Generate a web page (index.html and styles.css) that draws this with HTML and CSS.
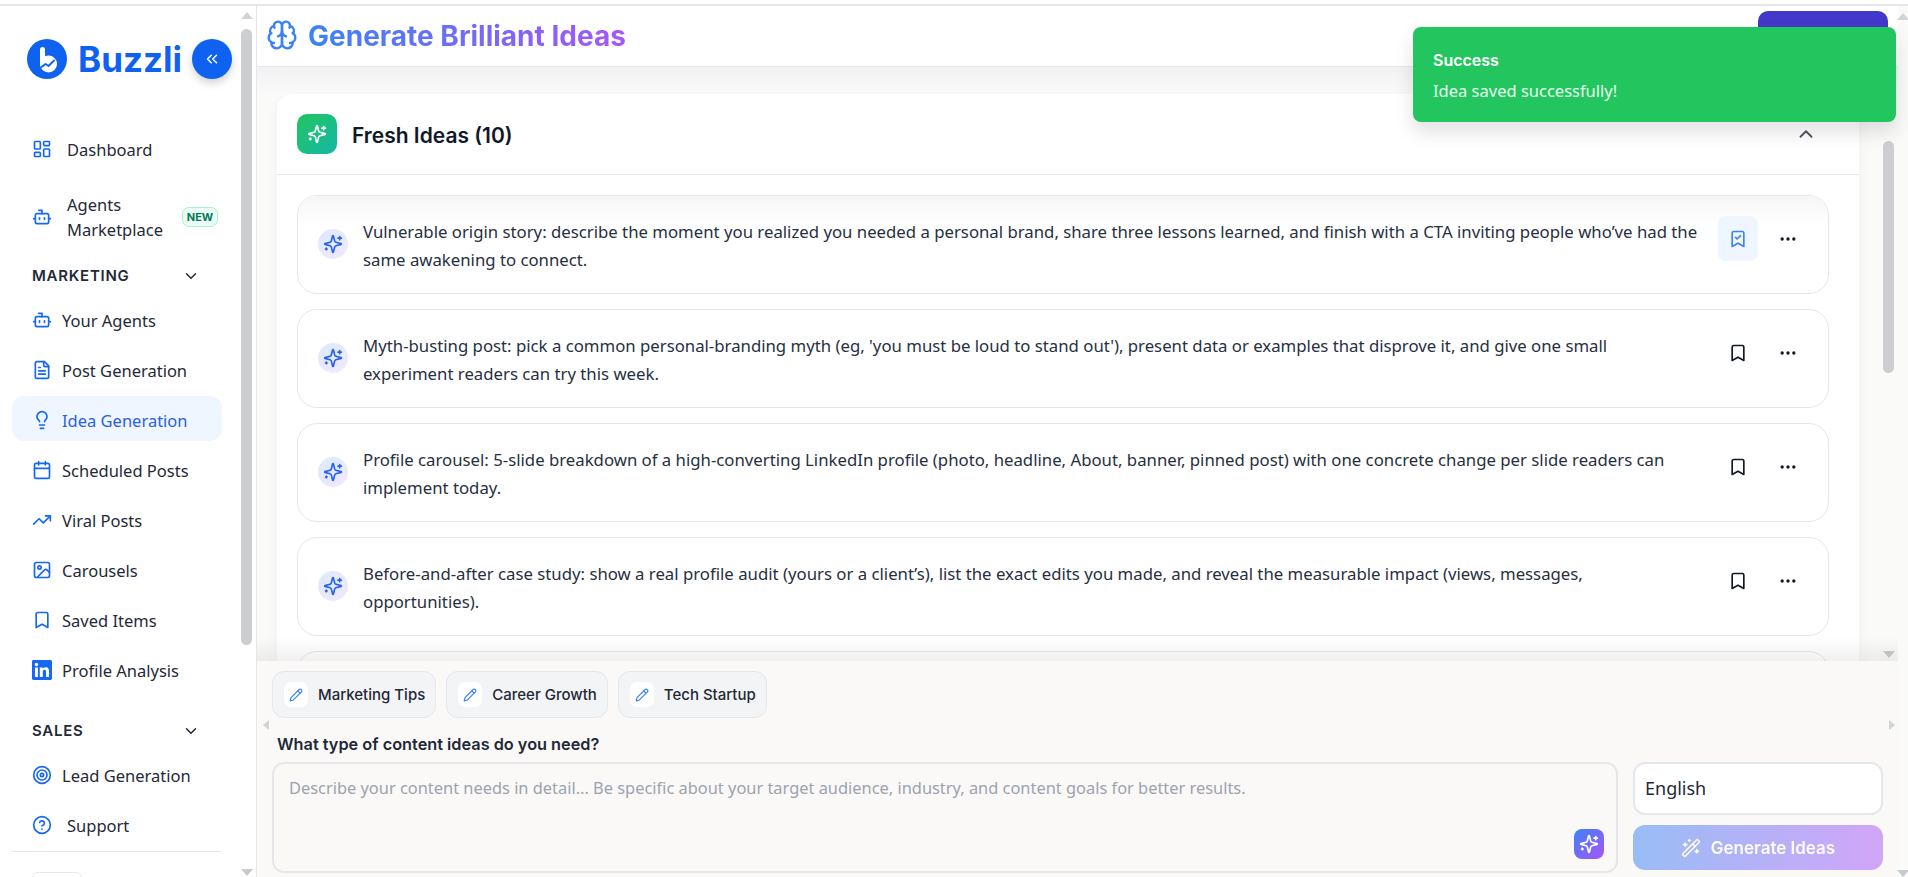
FILE: index.html
```html
<!DOCTYPE html>
<html lang="en">
<head>
<meta charset="utf-8">
<title>Buzzli - Generate Brilliant Ideas</title>
<link rel="stylesheet" href="styles.css">
</head>
<body>
<svg class="defs" aria-hidden="true">
  <symbol id="i-dash" viewBox="0 0 24 24"><rect x="3" y="3" width="7" height="9" rx="1"/><rect x="14" y="3" width="7" height="5" rx="1"/><rect x="14" y="12" width="7" height="9" rx="1"/><rect x="3" y="16" width="7" height="5" rx="1"/></symbol>
  <symbol id="i-bot" viewBox="0 0 24 24"><path d="M12 8V4H8"/><rect x="4" y="8" width="16" height="12" rx="2"/><path d="M2 14h2M20 14h2M15 13v2M9 13v2"/></symbol>
  <symbol id="i-file" viewBox="0 0 24 24"><path d="M15 2H6a2 2 0 0 0-2 2v16a2 2 0 0 0 2 2h12a2 2 0 0 0 2-2V7Z"/><path d="M14 2v4a2 2 0 0 0 2 2h4M10 9H8M16 13H8M16 17H8"/></symbol>
  <symbol id="i-bulb" viewBox="0 0 24 24"><path d="M15 14c.2-1 .7-1.7 1.5-2.5 1-.9 1.5-2.2 1.5-3.5A6 6 0 0 0 6 8c0 1 .2 2.2 1.5 3.5.7.7 1.3 1.5 1.5 2.5"/><path d="M9 18h6M10 22h4"/></symbol>
  <symbol id="i-cal" viewBox="0 0 24 24"><path d="M8 2v4M16 2v4"/><rect x="3" y="4" width="18" height="18" rx="2"/><path d="M3 10h18"/></symbol>
  <symbol id="i-trend" viewBox="0 0 24 24"><path d="M22 7l-8.500 8.500-5-5L2 17"/><path d="M16 7h6v6"/></symbol>
  <symbol id="i-image" viewBox="0 0 24 24"><rect x="3" y="3" width="18" height="18" rx="2"/><circle cx="9" cy="9" r="2"/><path d="m21 15-3.086-3.086a2 2 0 0 0-2.828 0L6 21"/></symbol>
  <symbol id="i-mark" viewBox="0 0 24 24"><path d="m19 21-7-4-7 4V5a2 2 0 0 1 2-2h10a2 2 0 0 1 2 2v16z"/></symbol>
  <symbol id="i-markc" viewBox="0 0 24 24"><path d="m19 21-7-4-7 4V5a2 2 0 0 1 2-2h10a2 2 0 0 1 2 2Z"/><path d="m9 10 2 2 4-4"/></symbol>
  <symbol id="i-target" viewBox="0 0 24 24"><circle cx="12" cy="12" r="10"/><circle cx="12" cy="12" r="6"/><circle cx="12" cy="12" r="2"/></symbol>
  <symbol id="i-help" viewBox="0 0 24 24"><circle cx="12" cy="12" r="10"/><path d="M9.090 9a3 3 0 0 1 5.830 1c0 2-3 3-3 3M12 17h.01"/></symbol>
  <symbol id="i-chevs" viewBox="0 0 24 24"><path d="m11 17-5-5 5-5M18 17l-5-5 5-5"/></symbol>
  <symbol id="i-down" viewBox="0 0 24 24"><path d="m6 9 6 6 6-6"/></symbol>
  <symbol id="i-up" viewBox="0 0 24 24"><path d="m18 15-6-6-6 6"/></symbol>
  <symbol id="i-spark" viewBox="0 0 24 24"><path d="M9.937 15.500A2 2 0 0 0 8.500 14.063l-6.135-1.582a.5.5 0 0 1 0-.962L8.500 9.936A2 2 0 0 0 9.937 8.500l1.582-6.135a.5.5 0 0 1 .963 0L14.063 8.500A2 2 0 0 0 15.500 9.937l6.135 1.581a.5.5 0 0 1 0 .964L15.500 14.063a2 2 0 0 0-1.437 1.437l-1.582 6.135a.5.5 0 0 1-.963 0z"/><path d="M20 3v4M22 5h-4M4 17v2M5 18H3"/></symbol>
  <symbol id="i-brain" viewBox="0 0 24 24"><path d="M12 5a3 3 0 1 0-5.997.125 4 4 0 0 0-2.526 5.770 4 4 0 0 0 .556 6.588A4 4 0 1 0 12 18Z"/><path d="M12 5a3 3 0 1 1 5.997.125 4 4 0 0 1 2.526 5.770 4 4 0 0 1-.556 6.588A4 4 0 1 1 12 18Z"/><path d="M15 13a4.500 4.500 0 0 1-3-4 4.500 4.500 0 0 1-3 4M17.599 6.500a3 3 0 0 0 .399-1.375M6.003 5.125A3 3 0 0 0 6.401 6.500M3.477 10.896a4 4 0 0 1 .585-.396M19.938 10.500a4 4 0 0 1 .585.396M6 18a4 4 0 0 1-1.967-.516M19.967 17.484A4 4 0 0 1 18 18"/></symbol>
  <symbol id="i-pencil" viewBox="0 0 24 24"><path d="M17 3a2.850 2.830 0 1 1 4 4L7.500 20.500 2 22l1.500-5.500Z"/><path d="m15 5 4 4"/></symbol>
  <symbol id="i-wand" viewBox="0 0 24 24"><path d="m21.640 3.640-1.280-1.280a1.210 1.210 0 0 0-1.720 0L2.360 18.640a1.210 1.210 0 0 0 0 1.720l1.280 1.280a1.200 1.200 0 0 0 1.720 0L21.640 5.360a1.200 1.200 0 0 0 0-1.720"/><path d="m14 7 3 3M5 6v4M19 14v4M10 2v2M7 8H3M21 16h-4M11 3H9"/></symbol>
  <symbol id="i-dots" viewBox="0 0 24 24"><circle cx="12" cy="12" r="1"/><circle cx="19" cy="12" r="1"/><circle cx="5" cy="12" r="1"/></symbol>
</svg>

<div class="top-strip"></div>
<div class="app">
  <aside class="sidebar">
    <div class="side-col">
      <div class="brand">
        <svg class="logo" viewBox="0 0 40 40"><circle cx="20" cy="20" r="20" class="logo-bg"/><path class="logo-stem" d="M15.500 10.500V25"/><circle class="logo-bowl" cx="21.500" cy="25" r="8.500"/><path class="logo-tick" d="M14.500 28l4-3 3 2 5.500-5.500"/></svg>
        <span class="brand-name">Buzzli</span>
        <button class="collapse"><svg class="ic-collapse"><use href="#i-chevs"/></svg></button>
      </div>
      <nav class="nav">
        <a class="item wide"><svg class="ic"><use href="#i-dash"/></svg><span>Dashboard</span></a>
        <a class="item wide tall"><svg class="ic"><use href="#i-bot"/></svg><span class="two-line">Agents Marketplace</span><em class="new">NEW</em></a>
        <div class="section first"><span>MARKETING</span><svg class="chev"><use href="#i-down"/></svg></div>
        <a class="item"><svg class="ic"><use href="#i-bot"/></svg><span>Your Agents</span></a>
        <a class="item"><svg class="ic"><use href="#i-file"/></svg><span>Post Generation</span></a>
        <a class="item active"><svg class="ic"><use href="#i-bulb"/></svg><span>Idea Generation</span></a>
        <a class="item"><svg class="ic"><use href="#i-cal"/></svg><span>Scheduled Posts</span></a>
        <a class="item"><svg class="ic"><use href="#i-trend"/></svg><span>Viral Posts</span></a>
        <a class="item"><svg class="ic"><use href="#i-image"/></svg><span>Carousels</span></a>
        <a class="item"><svg class="ic"><use href="#i-mark"/></svg><span>Saved Items</span></a>
        <a class="item"><svg class="ic solid" viewBox="0 0 24 24"><path d="M20.447 20.452h-3.554v-5.569c0-1.328-.027-3.037-1.852-3.037-1.853 0-2.136 1.445-2.136 2.939v5.667H9.351V9h3.414v1.561h.046c.477-.9 1.637-1.85 3.37-1.85 3.601 0 4.267 2.37 4.267 5.455v6.286zM5.337 7.433c-1.144 0-2.063-.926-2.063-2.065 0-1.138.92-2.063 2.063-2.063 1.14 0 2.064.925 2.064 2.063 0 1.139-.925 2.065-2.064 2.065zm1.782 13.019H3.555V9h3.564v11.452zM22.225 0H1.771C.792 0 0 .774 0 1.729v20.542C0 23.227.792 24 1.771 24h20.451C23.2 24 24 23.227 24 22.271V1.729C24 .774 23.2 0 22.222 0h.003z"/></svg><span>Profile Analysis</span></a>
        <div class="section"><span>SALES</span><svg class="chev"><use href="#i-down"/></svg></div>
        <a class="item"><svg class="ic"><use href="#i-target"/></svg><span>Lead Generation</span></a>
        <a class="item"><svg class="ic"><use href="#i-help"/></svg><span class="wide-text">Support</span></a>
      </nav>
      <div class="side-foot"><div class="foot-box"></div></div>
    </div>
    <div class="vbar side-bar">
      <i class="arrow up"></i>
      <b class="thumb side-thumb"></b>
      <i class="arrow down"></i>
    </div>
  </aside>

  <main class="main">
    <header class="head">
      <svg class="ic-brain"><use href="#i-brain"/></svg>
      <h1>Generate Brilliant Ideas</h1>
      <div class="head-btn"></div>
    </header>
    <div class="body-area">
      <section class="scroller">
        <div class="card">
          <div class="card-head">
            <span class="badge"><svg class="ic-white"><use href="#i-spark"/></svg></span>
            <h2>Fresh Ideas (10)</h2>
            <svg class="ic-collapse-up"><use href="#i-up"/></svg>
          </div>
          <div class="ideas">
            <article class="idea">
              <span class="idea-ic"><svg><use href="#i-spark"/></svg></span>
              <p>Vulnerable origin story: describe the moment you realized you needed a personal brand, share three lessons learned, and finish with a CTA inviting people who’ve had the same awakening to connect.</p>
              <button class="act saved"><svg><use href="#i-markc"/></svg></button>
              <button class="act"><svg><use href="#i-dots"/></svg></button>
            </article>
            <article class="idea">
              <span class="idea-ic"><svg><use href="#i-spark"/></svg></span>
              <p>Myth-busting post: pick a common personal-branding myth (eg, 'you must be loud to stand out'), present data or examples that disprove it, and give one small experiment readers can try this week.</p>
              <button class="act"><svg><use href="#i-mark"/></svg></button>
              <button class="act"><svg><use href="#i-dots"/></svg></button>
            </article>
            <article class="idea">
              <span class="idea-ic"><svg><use href="#i-spark"/></svg></span>
              <p>Profile carousel: 5-slide breakdown of a high-converting LinkedIn profile (photo, headline, About, banner, pinned post) with one concrete change per slide readers can implement today.</p>
              <button class="act"><svg><use href="#i-mark"/></svg></button>
              <button class="act"><svg><use href="#i-dots"/></svg></button>
            </article>
            <article class="idea">
              <span class="idea-ic"><svg><use href="#i-spark"/></svg></span>
              <p>Before-and-after case study: show a real profile audit (yours or a client’s), list the exact edits you made, and reveal the measurable impact (views, messages, opportunities).</p>
              <button class="act"><svg><use href="#i-mark"/></svg></button>
              <button class="act"><svg><use href="#i-dots"/></svg></button>
            </article>
            <article class="idea"></article>
          </div>
        </div>
        <div class="vbar content-bar">
          <b class="thumb content-thumb"></b>
          <i class="arrow down"></i>
        </div>
      </section>
      <section class="panel">
        <div class="chips">
          <button class="chip"><span class="chip-ic"><svg><use href="#i-pencil"/></svg></span>Marketing Tips</button>
          <button class="chip"><span class="chip-ic"><svg><use href="#i-pencil"/></svg></span>Career Growth</button>
          <button class="chip"><span class="chip-ic"><svg><use href="#i-pencil"/></svg></span>Tech Startup</button>
        </div>
        <i class="arrow left h-left"></i>
        <i class="arrow right h-right"></i>
        <label class="prompt-label">What type of content ideas do you need?</label>
        <div class="form-row">
          <div class="prompt">
            <span class="placeholder">Describe your content needs in detail... Be specific about your target audience, industry, and content goals for better results.</span>
            <span class="ai-btn"><svg><use href="#i-spark"/></svg></span>
          </div>
          <div class="controls">
            <div class="lang">English</div>
            <button class="generate"><svg><use href="#i-wand"/></svg>Generate Ideas</button>
          </div>
        </div>
      </section>
    </div>
  </main>

  <div class="vbar outer-bar">
    <i class="arrow up"></i>
    <i class="arrow down"></i>
  </div>
</div>

<div class="toast">
  <strong>Success</strong>
  <span>Idea saved successfully!</span>
</div>
</body>
</html>
```
FILE: styles.css
```css
* { box-sizing: border-box; }
html, body { margin: 0; height: 877px; overflow: hidden; }
body {
  background: #fff;
  color: #111827;
  font-family: "Noto Sans", "Liberation Sans", sans-serif;
  font-size: 16px;
  position: relative;
}
.defs { position: absolute; width: 0; height: 0; }
svg { fill: none; stroke: currentColor; stroke-width: 2; stroke-linecap: round; stroke-linejoin: round; display: block; }
button { font: inherit; border: 0; padding: 0; background: none; }

.top-strip { height: 6px; border-bottom: 2px solid #e5e7eb; }
.app { display: flex; height: 871px; }

/* sidebar */
.sidebar { width: 257px; flex: none; display: flex; border-right: 1px solid #e5e7eb; height: 100%; overflow: hidden; }
.side-col { width: 241px; flex: none; padding: 33px 0 0 12px; }
.brand { display: flex; align-items: center; height: 40px; margin-left: 15px; }
.logo { width: 40px; height: 40px; flex: none; stroke: none; }
.logo-bg { fill: #0f62f0; stroke: none; }
.logo-stem { stroke: #fff; stroke-width: 5; fill: none; }
.logo-bowl { fill: #fff; stroke: none; }
.logo-tick { stroke: #0f62f0; stroke-width: 1.8; fill: none; }
.brand-name { margin-left: 11px; font: 700 35px/40px Inter, sans-serif; color: #0f62f0; width: 114px; }
.collapse { width: 40px; height: 40px; border-radius: 50%; background: #0f62f0; color: #fff; display: flex; align-items: center; justify-content: center; box-shadow: 0 4px 8px rgba(0,0,0,.18); flex: none; }
.ic-collapse { width: 18px; height: 18px; }

.nav { margin-top: 48px; width: 210px; display: flex; flex-direction: column; gap: 6px; }
.item { display: flex; align-items: center; height: 44px; padding-left: 20px; border-radius: 12px; color: #1f2937; font-size: 16.500px; }
.item span { margin-left: 10px; white-space: nowrap; }
.item.tall { height: 56px; margin-top: 12px; }
.item.wide span, .item .wide-text { margin-left: 15px; }
.item .two-line { white-space: normal; width: 112px; line-height: 25px; }
.ic { width: 20px; height: 20px; flex: none; color: #1668f2; }
.ic.solid { fill: #1668f2; stroke: none; }
.item.active { height: 45px; margin: -2px 0 1px; padding-top: 3px; background: #eff6ff; color: #2b5fe0; }
.new { margin-left: 3px; width: 36px; height: 20px; border: 1px solid #a7f3d0; background: #ecfdf5; color: #047857; border-radius: 7px; font: 700 11px/18px Inter, sans-serif; text-align: center; }
.section { display: flex; align-items: center; justify-content: space-between; height: 20px; margin: 23px 0 6px; padding: 0 22px 0 20px; font: 600 15px/20px Inter, sans-serif; letter-spacing: .75px; color: #1f2937; }
.section.first { margin-top: 15px; }
.chev { width: 18px; height: 18px; }
.side-foot { margin-top: 4px; width: 210px; border-top: 1px solid #e5e7eb; padding: 20px 0 0 20px; }
.foot-box { width: 50px; height: 30px; border: 1px solid #e5e7eb; border-radius: 6px; }

/* fake classic scrollbars */
.vbar { position: relative; flex: none; width: 11px; }
.thumb { position: absolute; left: 0; width: 11px; background: #cdced2; border-radius: 6px; }
.arrow { position: absolute; width: 0; height: 0; border: 6px solid transparent; }
.arrow.up { border-top: 0; border-bottom: 7px solid #d2d3d7; left: 0; }
.arrow.down { border-bottom: 0; border-top: 7px solid #c9cacf; left: 0; }
.arrow.left { border-left: 0; border-right: 6px solid #d2d3d7; border-top-width: 5px; border-bottom-width: 5px; }
.arrow.right { border-right: 0; border-left: 6px solid #d2d3d7; border-top-width: 5px; border-bottom-width: 5px; }
.side-bar { width: 11px; }
.side-bar .up { top: 6px; }
.side-bar .down { bottom: 1px; }
.side-thumb { top: 23px; height: 616px; }

/* main */
.main { flex: 1; min-width: 0; display: flex; flex-direction: column; }
.head { height: 61px; flex: none; display: flex; align-items: center; gap: 10px; padding-left: 9px; border-bottom: 1px solid #e5e7eb; position: relative; overflow: hidden; box-shadow: 0 1px 2px rgba(0,0,0,.03); }
.ic-brain { width: 32px; height: 32px; color: #3b82f6; flex: none; stroke-width: 1.8; margin-top: -3px; }
h1 { margin: -1px 0 0; font: 700 28px/40px Inter, sans-serif; background: linear-gradient(90deg, #3b82f6, #a855f7); -webkit-background-clip: text; background-clip: text; color: transparent; }
.head-btn { margin-left: auto; margin-right: 10px; align-self: flex-start; margin-top: 5px; width: 130px; height: 50px; border-radius: 10px; background: #4338ca; }

.body-area { flex: 1; min-height: 0; display: flex; flex-direction: column; }
.scroller { flex: 1; min-height: 0; display: flex; background: #fafaf9; padding: 27px 4px 0 20px; overflow: hidden; position: relative; }
.scroller::before { content: ""; position: absolute; left: 0; right: 0; top: 0; height: 28px; background: linear-gradient(#f2f2f4, rgba(250,250,249,0)); }
.scroller::after { content: ""; position: absolute; left: 0; right: 0; bottom: 0; height: 24px; background: linear-gradient(rgba(0,0,0,0), rgba(0,0,0,.06)); pointer-events: none; }
.card { width: 1582px; flex: none; background: #fff; border-radius: 16px 16px 0 0; position: relative; box-shadow: 0 4px 14px rgba(0,0,0,.04); height: 900px; }
.card-head { height: 81px; display: flex; align-items: center; padding: 0 42px 1px 20px; border-bottom: 1px solid #e5e7eb; }
.badge { width: 40px; height: 40px; border-radius: 10px; background: linear-gradient(135deg, #22c55e, #14b8a6); display: flex; align-items: center; justify-content: center; flex: none; }
.ic-white { width: 20px; height: 20px; color: #fff; }
h2 { margin: 4px 0 0 15px; font: 600 21px/28px Inter, sans-serif; color: #111827; }
.ic-collapse-up { margin-left: auto; width: 22px; height: 22px; color: #4b5563; }
.ideas { padding: 20px 30px 0 20px; display: flex; flex-direction: column; gap: 15px; }
.idea { height: 99px; border: 1px solid #e5e7eb; border-radius: 20px; background: #fff; display: flex; align-items: flex-start; padding: 22px 20px 0 20px; flex: none; position: relative; }
.idea:first-child::before { content: ""; position: absolute; left: 0; right: 0; top: 0; height: 30px; border-radius: 20px 20px 0 0; background: linear-gradient(#f6f6f7, rgba(255,255,255,0)); }
.idea-ic { width: 30px; height: 30px; border-radius: 50%; background: linear-gradient(135deg, #dbeafe, #f3e8ff); flex: none; margin: 11px 15px 0 0; display: flex; align-items: center; justify-content: center; color: #2563eb; }
.idea-ic svg { width: 20px; height: 20px; }
.idea p { margin: 0; flex: 1; padding-right: 6px; font-size: 16.750px; line-height: 28px; color: #27303f; }
.act { width: 40px; height: 45px; margin: -2px 0 0 10px; border-radius: 8px; display: flex; align-items: center; justify-content: center; color: #111827; flex: none; }
.act svg { width: 20px; height: 20px; }
.idea p + .act { margin-left: 12px; }
.act.saved { background: #eff6ff; color: #3b82f6; }

.content-bar { margin-left: 24px; }
.content-thumb { top: 47px; height: 232px; }
.content-bar .down { bottom: 3px; }

/* bottom panel */
.panel { flex: none; height: 216px; background: #faf9f8; padding: 10px 15px 0 15px; position: relative; }
.chips { display: flex; gap: 10px; height: 47px; }
.chip { display: flex; align-items: center; height: 47px; padding: 0 10px 0 11px; border: 1px solid #e5e7eb; background: #f3f4f6; border-radius: 12px; font: 500 15px/20px Inter, sans-serif; color: #1f2937; white-space: nowrap; }
.chip-ic { width: 24px; height: 25px; margin-right: 10px; background: #fff; border-radius: 7px; display: flex; align-items: center; justify-content: center; color: #3b82f6; }
.chip-ic svg { width: 14px; height: 14px; }
.h-left { top: 59px; left: 6px; }
.h-right { top: 59px; right: 3px; }
.prompt-label { display: block; margin: 16px 0 8px 5px; font: 600 16.300px/20px Inter, sans-serif; color: #1f2937; }
.form-row { display: flex; gap: 15px; }
.prompt { position: relative; flex: 1; height: 111px; border: 2px solid #e5e7eb; border-radius: 12px; padding: 12px 15px; color: #9ca3af; font-size: 16.400px; }
.ai-btn { position: absolute; right: 12px; bottom: 12px; width: 30px; height: 30px; border-radius: 8px; background: linear-gradient(135deg, #3b82f6, #a855f7); display: flex; align-items: center; justify-content: center; color: #fff; }
.ai-btn svg { width: 20px; height: 20px; }
.controls { width: 250px; flex: none; display: flex; flex-direction: column; gap: 10px; }
.lang { height: 53px; background: #fff; border: 2px solid #e5e7eb; border-radius: 12px; padding-left: 10px; font-size: 18px; line-height: 49px; color: #1f2937; }
.generate { height: 45px; border-radius: 12px; background: linear-gradient(90deg, #3b82f6, #a855f7); opacity: .5; color: #fff; display: flex; align-items: center; justify-content: center; gap: 10px; font: 600 17px/24px Inter, sans-serif; }
.generate svg { width: 20px; height: 20px; }

.outer-bar { width: 10px; background: #fafaf9; }
.outer-bar .up { top: 7px; left: -1px; }
.outer-bar .down { bottom: 0; left: -1px; }

/* toast */
.toast { position: absolute; left: 1413px; top: 27px; width: 483px; height: 95px; background: #22c55e; border-radius: 8px; padding: 22px 20px; color: #fff; display: flex; flex-direction: column; box-shadow: 0 10px 20px rgba(0,0,0,.12); }
.toast strong { font: 600 16px/22px Inter, sans-serif; }
.toast span { margin-top: 8px; font-size: 16.500px; line-height: 24px; color: #e8fff0; }
```
